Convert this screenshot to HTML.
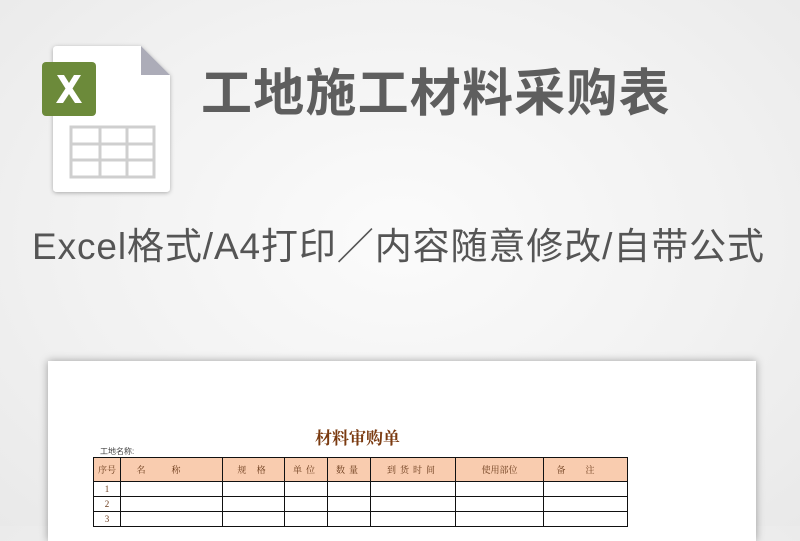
<!DOCTYPE html>
<html><head><meta charset="utf-8"><style>
*{margin:0;padding:0;box-sizing:border-box}
body{width:800px;height:526px;overflow:hidden;position:relative;background:radial-gradient(ellipse at 50% 45%,#fbfbfb 0%,#f1f1f1 60%,#e9e9e9 100%);font-family:"Liberation Sans","Noto Sans CJK SC",sans-serif}
.t{position:absolute;left:201px;top:52px;font-size:51px;font-weight:bold;color:#5e5e5e;white-space:nowrap;letter-spacing:1.2px}
.s{position:absolute;left:32px;top:216px;font-size:37px;color:#555;white-space:nowrap;letter-spacing:0.9px}
.page{position:absolute;left:48px;top:361px;width:708px;height:180px;background:#fff;box-shadow:0 0 8px rgba(0,0,0,.35)}
.h{position:absolute;left:267px;top:63px;font-size:17px;font-weight:bold;color:#7a3a10;font-family:"Liberation Serif","Noto Serif CJK SC",serif}
.n{position:absolute;left:52px;top:85px;font-size:8px;color:#444}
table{position:absolute;left:45px;top:96px;border-collapse:collapse;font-size:9px;color:#6a3a1a;font-family:"Liberation Serif","Noto Serif CJK SC",serif}
td{border:1.5px solid #111;text-align:center;height:15px;padding:0}
tr.hd td{background:#f9ccaf;height:24px;letter-spacing:4px}
</style></head><body>
<svg style="position:absolute;left:36px;top:40px" width="140" height="160" viewBox="36 40 140 160">
<defs><filter id="f" x="-20%" y="-20%" width="140%" height="140%"><feDropShadow dx="0" dy="1" stdDeviation="2" flood-opacity=".3"/></filter></defs>
<path d="M57 46 H141 L170 75 V188 Q170 192 166 192 H57 Q53 192 53 188 V50 Q53 46 57 46Z" fill="#fff" filter="url(#f)"/>
<path d="M141 46 L170 75 H141Z" fill="#acacb8"/>
<rect x="42" y="62" width="54" height="54" rx="4" fill="#6c8a3a"/>
<path d="M57 75 H64 L69 83 L74 75 H81 L72.5 88.5 L82 103 H75 L69 94 L63 103 H56 L65.5 88.5Z" fill="#fff"/>
<g fill="none" stroke="#cfcfcf" stroke-width="3"><rect x="71" y="127" width="83" height="50"/><path d="M71 144H154M71 160H154M100 127V177M127 127V177"/></g>
</svg>
<div class="t">工地施工材料采购表</div>
<div class="s">Excel格式/A4打印／内容随意修改/自带公式</div>
<div class="page">
<div class="h">材料审购单</div>
<div class="n">工地名称:</div>
<table>
<colgroup><col width="27"><col width="102"><col width="62"><col width="43"><col width="43"><col width="85"><col width="88"><col width="84"></colgroup>
<tr class="hd"><td style="letter-spacing:0">序号</td><td style="letter-spacing:26px">名称</td><td>规 格</td><td>单位</td><td>数量</td><td>到货时间</td><td style="letter-spacing:0">使用部位</td><td style="letter-spacing:20px">备注</td></tr>
<tr><td>1</td><td></td><td></td><td></td><td></td><td></td><td></td><td></td></tr>
<tr><td>2</td><td></td><td></td><td></td><td></td><td></td><td></td><td></td></tr>
<tr><td>3</td><td></td><td></td><td></td><td></td><td></td><td></td><td></td></tr>
</table>
</div>
</body></html>
